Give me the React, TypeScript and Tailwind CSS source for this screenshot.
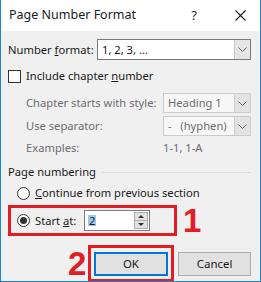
export default function App() {
  const font = { fontFamily: '"Noto Sans", "Open Sans", sans-serif' }

  const Chevron = () => (
    <svg width="9" height="5" viewBox="0 0 9 5" className="block">
      <path d="M0.5 0.5 L4.5 4.5 L8.5 0.5" fill="none" stroke="#606060" strokeWidth="1" />
    </svg>
  )

  const Radio = ({ checked }: { checked?: boolean }) => (
    <span className="flex h-[13px] w-[13px] shrink-0 items-center justify-center rounded-full border border-[#333] bg-white">
      {checked && <span className="h-[7px] w-[7px] rounded-full bg-[#333]" />}
    </span>
  )

  return (
    <div
      className="flex h-[282px] w-[261px] flex-col overflow-hidden border-x border-b border-[#1883d7] bg-[#f0f0f0] text-[11.2px] leading-none text-[#1a1a1a]"
      style={font}
    >
      {/* title bar */}
      <div className="flex h-[31px] shrink-0 items-center bg-white pl-[8px] pr-[14px] text-[12.5px]">
        <span className="flex-1">Page Number Format</span>
        <span className="mr-[38px] text-[13px]">?</span>
        <svg width="11" height="11" viewBox="0 0 11 11">
          <path d="M0.5 0.5 L10.5 10.5 M10.5 0.5 L0.5 10.5" stroke="#1a1a1a" strokeWidth="1.1" />
        </svg>
      </div>

      <div className="flex flex-col pl-[7px] pr-[9px]">
        {/* number format */}
        <div className="mt-[8px] flex h-[21px] items-center">
          <span className="w-[89px]">
            Number <span className="underline">f</span>ormat:
          </span>
          <div className="flex h-full flex-1 border border-[#7a7a7a] bg-white">
            <span className="flex flex-1 items-center pl-[4px]">1, 2, 3, …</span>
            <span className="flex w-[16px] items-center justify-center border-l border-[#c9c9c9] bg-[#e5e5e5]">
              <Chevron />
            </span>
          </div>
        </div>

        {/* include chapter number */}
        <div className="mt-[9px] flex h-[14px] items-center">
          <span className="h-[13px] w-[13px] border border-[#333] bg-white" />
          <span className="ml-[5px]">
            Include chapter <span className="underline">n</span>umber
          </span>
        </div>

        <div className="flex flex-col pl-[18px] text-[#6d6d6d]">
          <div className="mt-[10px] flex h-[20px] items-center">
            <span className="w-[137px]">Chapter starts with style:</span>
            <div className="flex h-full flex-1 border border-[#cccccc] bg-[#f7f7f7]">
              <span className="flex flex-1 items-center pl-[4px]">Heading 1</span>
              <span className="flex w-[16px] items-center justify-center border-l border-[#cccccc] bg-[#e3e3e3]">
                <Chevron />
              </span>
            </div>
          </div>
          <div className="mt-[3px] flex h-[20px] items-center">
            <span className="w-[137px]">Use separator:</span>
            <div className="flex h-full flex-1 border border-[#cccccc] bg-[#f7f7f7]">
              <span className="flex flex-1 items-center pl-[4px] whitespace-pre">-   (hyphen)</span>
              <span className="flex w-[16px] items-center justify-center border-l border-[#cccccc] bg-[#e3e3e3]">
                <Chevron />
              </span>
            </div>
          </div>
          <div className="mt-[2px] flex h-[20px] items-center">
            <span className="w-[137px]">Examples:</span>
            <span>1-1, 1-A</span>
          </div>
        </div>

        {/* page numbering group */}
        <div className="mt-[6px] flex h-[16px] items-center">
          <span>Page numbering</span>
          <span className="ml-[6px] h-px flex-1 bg-[#dcdcdc]" />
        </div>

        <div className="mt-[5px] flex h-[16px] items-center pl-[9px]">
          <Radio />
          <span className="ml-[5px]">
            <span className="underline">C</span>ontinue from previous section
          </span>
        </div>

        <div className="mt-[3px] flex items-center">
          <div className="flex h-[31px] w-[169px] items-center border-[3px] border-[#e11d26] pl-[6px]">
            <Radio checked />
            <span className="ml-[5px] w-[49px]">
              Start <span className="underline">a</span>t:
            </span>
            <div className="flex h-[21px] w-[66px] border border-[#7a7a7a] bg-white">
              <span className="flex flex-1 items-center pl-[3px]">
                <span className="bg-[#9cc8ee] px-px">2</span>
              </span>
              <span className="m-px flex w-[14px] flex-col border border-[#adadad] bg-[#e1e1e1]">
                <span className="flex flex-1 items-center justify-center border-b border-[#adadad]">
                  <span className="h-0 w-0 border-x-[3px] border-b-[3px] border-x-transparent border-b-[#333]" />
                </span>
                <span className="flex flex-1 items-center justify-center">
                  <span className="h-0 w-0 border-x-[3px] border-t-[3px] border-x-transparent border-t-[#333]" />
                </span>
              </span>
            </div>
          </div>
          <span
            className="ml-[6px] text-[33px] font-bold text-[#e11d26]"
            style={{ fontFamily: '"Liberation Sans", Arial, sans-serif' }}
          >
            1
          </span>
        </div>

        {/* buttons */}
        <div className="mt-[8px] flex items-center">
          <span
            className="ml-[60px] w-[20px] text-[33px] font-bold text-[#e11d26]"
            style={{ fontFamily: '"Liberation Sans", Arial, sans-serif' }}
          >
            2
          </span>
          <div className="flex h-[37px] w-[88px] items-center justify-center border-[3px] border-[#e11d26]">
            <button className="flex h-[24px] w-[74px] items-center justify-center border-2 border-[#0078d7] bg-[#e1e1e1] text-[11.5px]">
              OK
            </button>
          </div>
          <button className="ml-[4px] flex h-[24px] w-[74px] items-center justify-center border border-[#adadad] bg-[#e1e1e1] text-[11.5px]">
            Cancel
          </button>
        </div>
      </div>
    </div>
  )
}
